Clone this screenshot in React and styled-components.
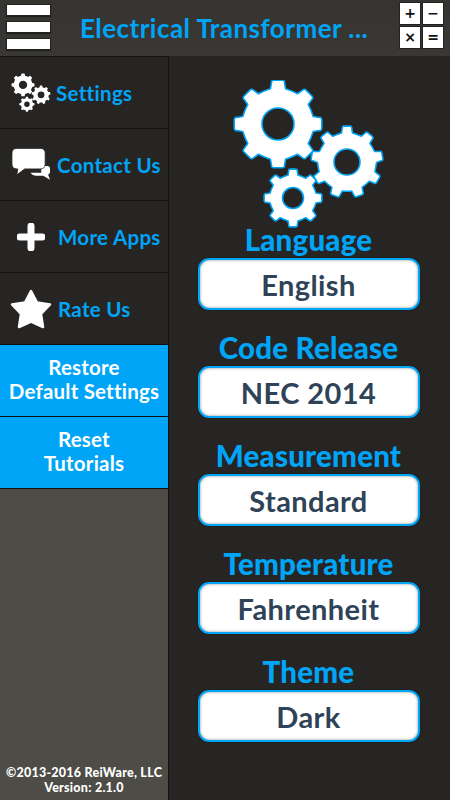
import React from 'react';
import styled, { createGlobalStyle } from 'styled-components';

const GlobalStyle = createGlobalStyle`
  html, body { margin: 0; padding: 0; background: #262523; }
  * { box-sizing: border-box; }
  body { font-family: Lato, "Open Sans", sans-serif; }
`;

const Page = styled.div`
  width: 450px;
  height: 800px;
  display: flex;
  flex-direction: column;
  overflow: hidden;
`;

const Header = styled.header`
  height: 56px;
  flex: none;
  display: flex;
  align-items: center;
  padding: 0 6px;
  background: linear-gradient(#363431, #3a3835);
`;

const Burger = styled.div`
  width: 45px;
  height: 46px;
  margin-bottom: 3px;
  display: flex;
  flex-direction: column;
  justify-content: space-between;
  flex: none;
  span {
    height: 12px;
    background: #fff;
    border: 1px solid #222;
    box-shadow: 0 1px 1px rgba(0, 0, 0, 0.4);
  }
`;

const Title = styled.h1`
  flex: 1;
  margin: 0;
  padding-left: 29px;
  font-size: 26px;
  font-weight: 700;
  color: #00a5f7;
  letter-spacing: 0.45px;
  white-space: nowrap;
`;

const CalcGrid = styled.div`
  display: grid;
  grid-template-columns: 22px 22px;
  grid-auto-rows: 23px;
  gap: 1px;
  margin-bottom: 5px;
`;

const CalcKey = styled.div`
  background: #fff;
  border: 1px solid #222;
  color: #111;
  font-size: 14px;
  font-weight: 700;
  line-height: 20px;
  text-align: center;
  font-family: "DejaVu Sans", sans-serif;
`;

const Body = styled.div`
  flex: 1;
  display: flex;
  min-height: 0;
`;

const Sidebar = styled.nav`
  width: 169px;
  flex: none;
  display: flex;
  flex-direction: column;
  background: #4d4c46;
  border-right: 1px solid #141414;
`;

const NavItem = styled.div`
  height: 73px;
  flex: none;
  display: flex;
  align-items: center;
  gap: ${(p) => p.$gap || 5}px;
  padding-left: ${(p) => p.$pad || 11}px;
  background: #262523;
  border-top: 1px solid #111;
  border-bottom: 1px solid #111;
  margin-bottom: -1px;
  color: #00a5f7;
  font-size: 20.5px;
  font-weight: 700;
  letter-spacing: 0.3px;
  white-space: nowrap;
`;

const ActionItem = styled.div`
  height: 73px;
  flex: none;
  display: flex;
  align-items: center;
  justify-content: center;
  padding-bottom: 3px;
  text-align: center;
  background: #00a5f7;
  border-top: 1px solid #111;
  border-bottom: 1px solid #111;
  margin-bottom: -1px;
  color: #fff;
  font-size: 20.5px;
  font-weight: 700;
  line-height: 24px;
  letter-spacing: 0.2px;
  white-space: nowrap;
`;

const Copyright = styled.div`
  margin-top: auto;
  padding-bottom: 5px;
  text-align: center;
  color: #fff;
  font-size: 12.5px;
  font-weight: 900;
  line-height: 15px;
  letter-spacing: 0.25px;
  white-space: nowrap;
`;

const Content = styled.main`
  flex: 1;
  display: flex;
  flex-direction: column;
  align-items: center;
  padding: 24px 2px 0 0;
  background: #262523;
`;

const HeroIcon = styled.div`
  height: 150px;
  margin-bottom: -3px;
  svg { display: block; }
`;

const Field = styled.div`
  width: 222px;
  height: 108px;
  flex: none;
  display: flex;
  flex-direction: column;
  align-items: center;
`;

const Label = styled.div`
  height: 31px;
  line-height: 25px;
  font-size: 29.5px;
  font-weight: 900;
  letter-spacing: 0.2px;
  color: #00a5f7;
  white-space: nowrap;
`;

const Select = styled.div`
  width: 222px;
  height: 52px;
  flex: none;
  display: flex;
  align-items: center;
  justify-content: center;
  background: #fff;
  border: 2px solid #00a5f7;
  border-radius: 11px;
  box-shadow: inset 0 0 3px rgba(0, 0, 0, 0.45), 0 0 1px #000;
  color: #2f4358;
  font-size: 29px;
  font-weight: 700;
  letter-spacing: 0.4px;
`;

// outline of a cog with soft teeth, centred on cx/cy
const gearPath = (cx, cy, outer, root, hole, teeth) => {
  const step = (Math.PI * 2) / teeth;
  const pt = (r, a) => `${(cx + r * Math.cos(a)).toFixed(2)} ${(cy + r * Math.sin(a)).toFixed(2)}`;
  let d = '';
  for (let i = 0; i < teeth; i++) {
    const a = i * step - Math.PI / 2;
    d += `${i === 0 ? 'M' : 'L'}${pt(root, a - step * 0.27)} `;
    d += `L${pt(outer * 0.95, a - step * 0.2)} Q${pt(outer, a - step * 0.2)} ${pt(outer, a - step * 0.12)} `;
    d += `L${pt(outer, a + step * 0.12)} Q${pt(outer, a + step * 0.2)} ${pt(outer * 0.95, a + step * 0.2)} `;
    d += `L${pt(root, a + step * 0.27)} `;
    d += `Q${pt(root, a + step * 0.5)} ${pt(root, a + step * 0.73)} `;
  }
  d += 'Z ';
  d += `M${cx + hole} ${cy} A${hole} ${hole} 0 1 0 ${cx - hole} ${cy} A${hole} ${hole} 0 1 0 ${cx + hole} ${cy} Z`;
  return d;
};

const Gears = ({ width, height, stroke }) => (
  <svg width={width} height={height} viewBox="0 0 153 150">
    {[
      [46, 44, 44, 36, 16, 8],
      [115, 82, 36, 29.5, 13, 9],
      [61, 118, 29, 23.5, 10.5, 8],
    ].map((g) => (
      <path
        key={g[0]}
        d={gearPath(...g)}
        fill="#fff"
        fillRule="evenodd"
        stroke={stroke}
        strokeWidth={stroke === 'none' ? 0 : 1.6}
        strokeLinejoin="round"
      />
    ))}
  </svg>
);

const ChatIcon = () => (
  <svg width="41" height="33" viewBox="0 0 42 33">
    <path d="M31 18 h6 q3 0 3 3 v3 q0 2 -2 3 l2 5 l-7 -4 h-7 q-4 0 -6 -3 h11 z" fill="#fff" />
    <path d="M6 0 h24 q5 0 5 5 v11 q0 5 -5 5 h-16 l-8 6 l1 -6 h-1 q-5 0 -5 -5 v-11 q0 -5 5 -5 z" fill="#fff" stroke="#262523" strokeWidth="0.8" />
  </svg>
);

const PlusIcon = () => (
  <svg width="28" height="28" viewBox="0 0 28 28">
    <path d="M14 3 v22 M3 14 h22" stroke="#fff" strokeWidth="7" strokeLinecap="round" />
  </svg>
);

const StarIcon = () => (
  <svg width="42" height="40" viewBox="0 0 42 40">
    <path
      d="M21 2 L27 13.5 L40 15.5 L31 25 L33 38 L21 32.5 L9 38 L11 25 L2 15.5 L15 13.5 Z"
      fill="#fff"
      stroke="#fff"
      strokeWidth="2.5"
      strokeLinejoin="round"
    />
  </svg>
);

const fields = [
  ['Language', 'English'],
  ['Code Release', 'NEC 2014'],
  ['Measurement', 'Standard'],
  ['Temperature', 'Fahrenheit'],
  ['Theme', 'Dark'],
];

export default function App() {
  return (
    <Page>
      <GlobalStyle />
      <Header>
        <Burger>
          <span />
          <span />
          <span />
        </Burger>
        <Title>Electrical Transformer ...</Title>
        <CalcGrid>
          <CalcKey>+</CalcKey>
          <CalcKey>−</CalcKey>
          <CalcKey>×</CalcKey>
          <CalcKey>=</CalcKey>
        </CalcGrid>
      </Header>
      <Body>
        <Sidebar>
          <NavItem>
            <Gears width={40} height={40} stroke="none" />
            <span>Settings</span>
          </NavItem>
          <NavItem>
            <ChatIcon />
            <span>Contact Us</span>
          </NavItem>
          <NavItem $pad={17} $gap={13}>
            <PlusIcon />
            <span>More Apps</span>
          </NavItem>
          <NavItem $pad={10} $gap={6}>
            <StarIcon />
            <span>Rate Us</span>
          </NavItem>
          <ActionItem>
            Restore
            <br />
            Default Settings
          </ActionItem>
          <ActionItem>
            Reset
            <br />
            Tutorials
          </ActionItem>
          <Copyright>
            ©2013-2016 ReiWare, LLC
            <br />
            Version: 2.1.0
          </Copyright>
        </Sidebar>
        <Content>
          <HeroIcon>
            <Gears width={153} height={150} stroke="#00a5f7" />
          </HeroIcon>
          {fields.map(([label, value]) => (
            <Field key={label}>
              <Label>{label}</Label>
              <Select>{value}</Select>
            </Field>
          ))}
        </Content>
      </Body>
    </Page>
  );
}
